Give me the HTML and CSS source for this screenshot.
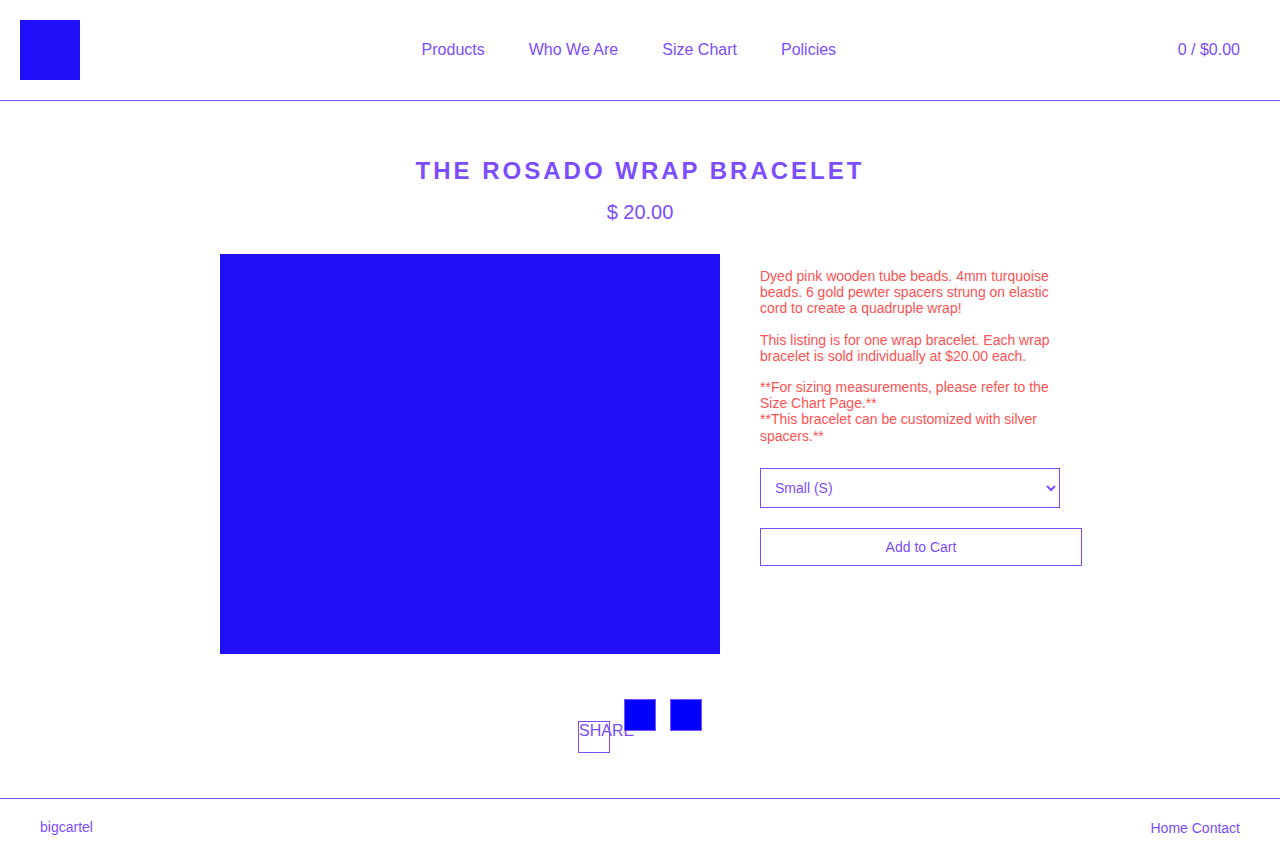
FILE: index.html
```html
<!DOCTYPE html>
<html lang="en">
<head>
<meta charset="utf-8">
<title>The Rosado Wrap Bracelet</title>
<link rel="stylesheet" href="styles.css">
</head>
<body>
<header class="site-header">
  <a class="logo" href="#" aria-label="Home"></a>
  <nav class="main-nav">
    <a href="#">Products</a>
    <a href="#">Who We Are</a>
    <a href="#">Size Chart</a>
    <a href="#">Policies</a>
  </nav>
  <a class="cart" href="#">0 / $0.00</a>
</header>

<main class="product">
  <h1 class="product-title">The Rosado Wrap Bracelet</h1>
  <div class="product-price">$ 20.00</div>

  <div class="product-body">
    <div class="product-image"></div>
    <div class="product-details">
      <div class="description">
        <p>Dyed pink wooden tube beads. 4mm turquoise beads. 6 gold pewter spacers strung on elastic cord to create a quadruple wrap!</p>
        <p>This listing is for one wrap bracelet. Each wrap bracelet is sold individually at $20.00 each.</p>
        <p>**For sizing measurements, please refer to the Size Chart Page.**<br>**This bracelet can be customized with silver spacers.**</p>
      </div>
      <form class="cart-form">
        <select class="option-select">
          <option>Small (S)</option>
          <option>Medium (M)</option>
          <option>Large (L)</option>
        </select>
        <button type="button" class="add-button">Add to Cart</button>
      </form>
    </div>
  </div>

  <div class="extras">
    <div class="share">SHARE</div>
    <a class="thumb" href="#"></a>
    <a class="thumb" href="#"></a>
  </div>
</main>

<footer class="site-footer">
  <a class="credit" href="#">bigcartel</a>
  <nav class="footer-nav">
    <a href="#">Home</a> <a href="#">Contact</a>
  </nav>
</footer>
</body>
</html>
```

FILE: styles.css
```css
* { box-sizing: border-box; }

html, body {
  margin: 0;
  padding: 0;
  background: #ffffff;
}

body {
  font-family: "Liberation Sans", Arial, sans-serif;
  color: #7c4dff;
}

a {
  color: #7c4dff;
  text-decoration: none;
}

/* Header */
.site-header {
  display: flex;
  align-items: center;
  justify-content: space-between;
  height: 101px;
  padding: 0 40px 0 20px;
  border-bottom: 1px solid #7c4dff;
}

.logo {
  display: block;
  width: 60px;
  height: 60px;
  background: #1f10f9;
}

.main-nav {
  display: flex;
  font-size: 16px;
}

.main-nav a {
  padding: 0 22px;
}

.cart {
  font-size: 16px;
}

/* Product */
.product {
  width: 840px;
  margin: 0 auto;
  padding-top: 56px;
}

.product-title {
  margin: 0;
  text-align: center;
  font-size: 24px;
  font-weight: bold;
  text-transform: uppercase;
  letter-spacing: 3px;
  line-height: 28px;
}

.product-price {
  margin-top: 15px;
  text-align: center;
  font-size: 20px;
  line-height: 24px;
}

.product-body {
  display: flex;
  gap: 40px;
  margin-top: 30px;
}

.product-image {
  flex: none;
  width: 500px;
  height: 400px;
  background: #1f10f9;
}

.product-details {
  width: 300px;
  padding-top: 14px;
}

.description {
  color: #ff5252;
  font-size: 14px;
  line-height: 16.2px;
}

.description p {
  margin: 0 0 15px;
}

.cart-form {
  display: flex;
  flex-direction: column;
  align-items: flex-start;
  gap: 20px;
  margin-top: 24px;
}

.option-select {
  width: 300px;
  height: 40px;
  padding: 0 10px;
  font-family: "Liberation Sans", Arial, sans-serif;
  font-size: 14px;
  color: #7c4dff;
  background: #ffffff;
  border: 1px solid #7c4dff;
  border-radius: 0;
}

.add-button {
  width: 322px;
  height: 38px;
  font-family: "Liberation Sans", Arial, sans-serif;
  font-size: 14px;
  color: #7c4dff;
  background: #ffffff;
  border: 1px solid #7c4dff;
  border-radius: 0;
  cursor: pointer;
}

/* Share + thumbnails */
.extras {
  display: flex;
  justify-content: center;
  align-items: flex-start;
  gap: 14px;
  padding: 45px 0 45px;
}

.share {
  width: 32px;
  height: 32px;
  margin-top: 22px;
  border: 1px solid #7c4dff;
  font-size: 16px;
  line-height: 18px;
  white-space: nowrap;
}

.thumb {
  display: block;
  width: 32px;
  height: 32px;
  background: #0000ff;
  border: 1px solid #7c4dff;
}

/* Footer */
.site-footer {
  display: flex;
  justify-content: space-between;
  align-items: flex-start;
  border-top: 1px solid #7c4dff;
  padding: 20px 40px 20px;
  font-size: 14px;
}

.footer-nav {
  padding-top: 1px;
}
```
